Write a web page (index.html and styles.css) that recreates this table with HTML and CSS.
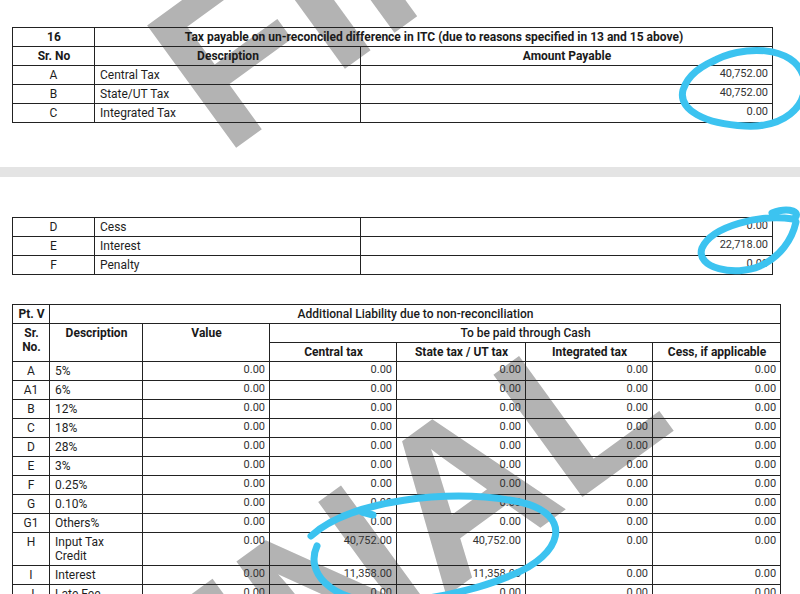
FILE: index.html
```html
<!DOCTYPE html>
<html lang="en">
<head>
<meta charset="utf-8">
<title>GSTR-9C</title>
<link rel="stylesheet" href="styles.css">
</head>
<body>
<div class="wm wm-top">FINAL</div>
<div class="wm wm-bottom">FINAL</div>

<div class="page page1">
  <table class="tbl t16">
    <colgroup><col class="c-sr"><col class="c-desc"><col class="c-amt"></colgroup>
    <tr class="hd"><th>16</th><th colspan="2">Tax payable on un-reconciled difference in ITC (due to reasons specified in 13 and 15 above)</th></tr>
    <tr class="hd"><th>Sr. No</th><th>Description</th><th>Amount Payable</th></tr>
    <tr><td class="sr">A</td><td>Central Tax</td><td class="num">40,752.00</td></tr>
    <tr><td class="sr">B</td><td>State/UT Tax</td><td class="num">40,752.00</td></tr>
    <tr><td class="sr">C</td><td>Integrated Tax</td><td class="num">0.00</td></tr>
  </table>
</div>

<div class="sep"></div>

<div class="page page2">
  <table class="tbl t16">
    <colgroup><col class="c-sr"><col class="c-desc"><col class="c-amt"></colgroup>
    <tr><td class="sr">D</td><td>Cess</td><td class="num">0.00</td></tr>
    <tr><td class="sr">E</td><td>Interest</td><td class="num">22,718.00</td></tr>
    <tr><td class="sr">F</td><td>Penalty</td><td class="num">0.00</td></tr>
  </table>

  <table class="tbl ptv">
    <colgroup><col class="p-sr"><col class="p-desc"><col class="p-val"><col class="p-ct"><col class="p-st"><col class="p-it"><col class="p-cs"></colgroup>
    <tr class="hd"><th>Pt. V</th><th colspan="6" class="med">Additional Liability due to non-reconciliation</th></tr>
    <tr class="hd"><th rowspan="2">Sr. No.</th><th rowspan="2">Description</th><th rowspan="2">Value</th><th colspan="4" class="med">To be paid through Cash</th></tr>
    <tr class="hd"><th>Central tax</th><th>State tax / UT tax</th><th>Integrated tax</th><th>Cess, if applicable</th></tr>
    <tr><td class="sr">A</td><td>5%</td><td class="num">0.00</td><td class="num">0.00</td><td class="num">0.00</td><td class="num">0.00</td><td class="num">0.00</td></tr>
    <tr><td class="sr">A1</td><td>6%</td><td class="num">0.00</td><td class="num">0.00</td><td class="num">0.00</td><td class="num">0.00</td><td class="num">0.00</td></tr>
    <tr><td class="sr">B</td><td>12%</td><td class="num">0.00</td><td class="num">0.00</td><td class="num">0.00</td><td class="num">0.00</td><td class="num">0.00</td></tr>
    <tr><td class="sr">C</td><td>18%</td><td class="num">0.00</td><td class="num">0.00</td><td class="num">0.00</td><td class="num">0.00</td><td class="num">0.00</td></tr>
    <tr><td class="sr">D</td><td>28%</td><td class="num">0.00</td><td class="num">0.00</td><td class="num">0.00</td><td class="num">0.00</td><td class="num">0.00</td></tr>
    <tr><td class="sr">E</td><td>3%</td><td class="num">0.00</td><td class="num">0.00</td><td class="num">0.00</td><td class="num">0.00</td><td class="num">0.00</td></tr>
    <tr><td class="sr">F</td><td>0.25%</td><td class="num">0.00</td><td class="num">0.00</td><td class="num">0.00</td><td class="num">0.00</td><td class="num">0.00</td></tr>
    <tr><td class="sr">G</td><td>0.10%</td><td class="num">0.00</td><td class="num">0.00</td><td class="num">0.00</td><td class="num">0.00</td><td class="num">0.00</td></tr>
    <tr><td class="sr">G1</td><td>Others%</td><td class="num">0.00</td><td class="num">0.00</td><td class="num">0.00</td><td class="num">0.00</td><td class="num">0.00</td></tr>
    <tr><td class="sr">H</td><td>Input Tax Credit</td><td class="num">0.00</td><td class="num">40,752.00</td><td class="num">40,752.00</td><td class="num">0.00</td><td class="num">0.00</td></tr>
    <tr><td class="sr">I</td><td>Interest</td><td class="num">0.00</td><td class="num">11,358.00</td><td class="num">11,358.00</td><td class="num">0.00</td><td class="num">0.00</td></tr>
    <tr><td class="sr">J</td><td>Late Fee</td><td class="num">0.00</td><td class="num">0.00</td><td class="num">0.00</td><td class="num">0.00</td><td class="num">0.00</td></tr>
  </table>
</div>

<svg class="ink" width="800" height="594" viewBox="0 0 800 594" aria-hidden="true">
  <path d="M712 62 C740 45 795 44 804 78 C809 108 782 128 745 126 C705 124 678 110 683 90 C688 75 700 66 722 57"/>
  <path d="M772 213 C790 206 803 213 793 219 C760 214 712 226 702 248 C695 268 735 277 760 266 C780 257 792 240 796 222"/>
  <path d="M311 536 C350 500 450 488 520 502 C575 515 562 555 512 575 C472 592 420 602 380 602 C330 600 305 572 317 546"/>
  <path d="M362 512 L373 515"/>
</svg>
</body>
</html>
```

FILE: styles.css
```css
html, body {
  margin: 0;
  padding: 0;
  overflow: hidden;
}
body {
  position: relative;
  width: 800px;
  height: 594px;
  background: #ffffff;
  font-family: Roboto, "Noto Sans", "Liberation Sans", sans-serif;
  color: #1e1e1e;
}

.wm {
  position: absolute;
  z-index: 0;
  font-family: "Liberation Sans", Arial, sans-serif;
  font-weight: bold;
  font-size: 220px;
  line-height: 1;
  color: #b3b3b3;
  white-space: nowrap;
  transform-origin: 0 0;
  transform: rotate(-36deg);
}
.wm-top { left: 115px; top: 6px; }
.wm-bottom { left: 46px; top: 657px; }

.page {
  position: relative;
  z-index: 1;
}
.page1 {
  height: 167px;
  box-sizing: border-box;
  padding: 27px 0 0 12px;
}
.sep {
  position: relative;
  z-index: 1;
  height: 10px;
  background: #e4e4e4;
}
.page2 {
  padding: 40px 0 0 12px;
}

.tbl {
  border-collapse: collapse;
  table-layout: fixed;
  font-size: 12px;
}
.tbl th, .tbl td {
  border: 1px solid #222;
  padding: 2px 4px 2px 5px;
  line-height: 14px;
  vertical-align: top;
  overflow: hidden;
  white-space: nowrap;
}
.tbl th {
  font-weight: bold;
  text-align: center;
  color: #1a1a1a;
}
.tbl th.med { font-weight: 500; }
.tbl td.sr { text-align: center; padding-left: 4px; }
.tbl td.num {
  text-align: right;
  font-size: 11px;
  color: #333;
  padding-top: 1px;
  padding-right: 4px;
}

.t16 { width: 761px; }
.c-sr { width: 82px; }
.c-desc { width: 266px; }
.c-amt { width: 412px; }

.ptv { width: 769px; margin-top: 29px; }
.ptv th, .ptv td { white-space: normal; }
.p-sr { width: 37px; }
.p-desc { width: 93px; }
.p-val { width: 127px; }
.p-ct { width: 127px; }
.p-st { width: 129px; }
.p-it { width: 127px; }
.p-cs { width: 128px; }

.ink {
  position: absolute;
  left: 0;
  top: 0;
  z-index: 2;
  pointer-events: none;
  fill: none;
  stroke: #3cc3f0;
  stroke-width: 7;
  stroke-linecap: round;
  stroke-linejoin: round;
}
```
